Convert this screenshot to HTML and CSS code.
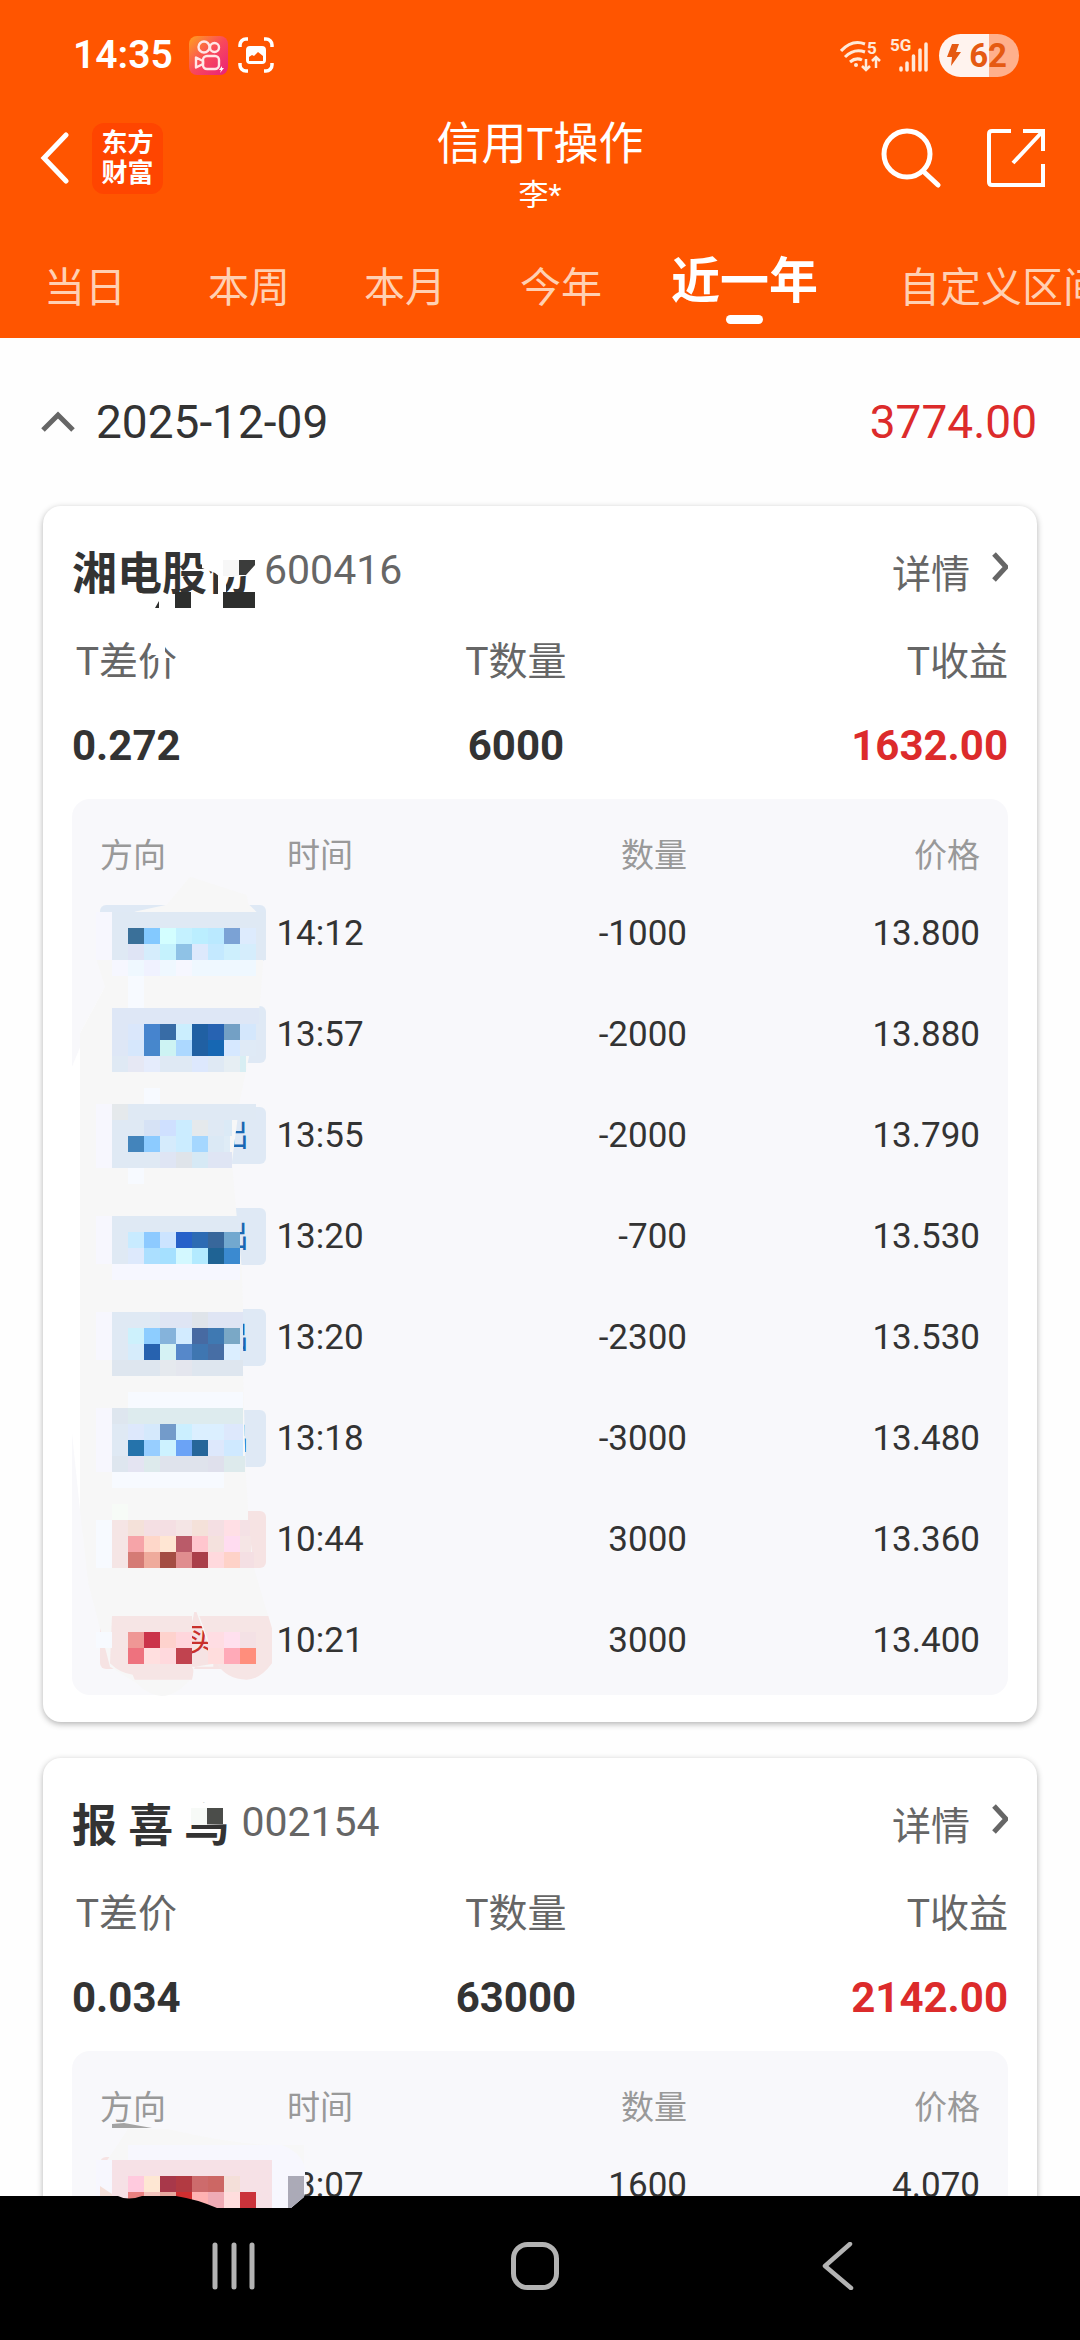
FILE: index.html
```
<!DOCTYPE html>
<html lang="zh-CN">
<head>
    <meta charset="UTF-8">
    <meta name="viewport" content="width=device-width, initial-scale=1">
    <title>信用T操作</title>
    <link rel="stylesheet" href="styles.css">
</head>
<body>
    <header class="header">
        <div class="status-bar">
            <span class="clock">14:35</span>
            <svg class="app-icon" width="39" height="39" viewBox="0 0 39 39">
                <defs>
                    <linearGradient id="app" x1="0" y1="0" x2="1" y2="1">
                        <stop offset="0" stop-color="#ffa11f"/>
                        <stop offset="0.5" stop-color="#f9495b"/>
                        <stop offset="1" stop-color="#e8207c"/>
                    </linearGradient>
                </defs>
                <rect width="39" height="39" rx="8" fill="url(#app)"/>
                <g fill="none" stroke="#ffe6e6" stroke-width="2.4">
                    <circle cx="15" cy="11" r="5.5"/>
                    <circle cx="25.500" cy="11.500" r="4.5"/>
                    <rect x="14" y="20" width="16" height="13" rx="4"/>
                    <path d="M14 25l-7-3.500v10l7-3.500z" stroke-linejoin="round"/>
                </g>
                <path d="M33 30l-3 4h2l-1 3 4-5h-2z" fill="#fff"/>
            </svg>
            <svg class="scan-icon" width="36" height="36" viewBox="0 0 36 36">
                <path d="M2 10V8a6 6 0 0 1 6-6h2M26 2h2a6 6 0 0 1 6 6v2M34 26v2a6 6 0 0 1-6 6h-2M10 34H8a6 6 0 0 1-6-6v-2" fill="none" stroke="#fff" stroke-width="3.500"/>
                <path fill-rule="evenodd" fill="#fff" d="M12 9h12a4 4 0 0 1 4 4v10a4 4 0 0 1-4 4H12a4 4 0 0 1-4-4V13a4 4 0 0 1 4-4zM11 20v4h14v-5l-5-4-4 4-2-1z"/>
            </svg>
            <div class="status-right">
                <svg width="42" height="44" viewBox="0 -8 42 44" fill="none" stroke="#ffe9d8" stroke-width="3">
                    <path d="M1 10Q12-2 25 3M5 16Q14 7 25 11M10 21Q16 16 22 19"/>
                    <circle cx="16" cy="24" r="2" fill="#ffe9d8" stroke="none"/>
                    <path d="M26 18v11M22 25l4 4 4-4M36 27V17M32 20l4-4 4 4" stroke-width="2.500"/>
                    <text class="tiny" x="27" y="13">5</text>
                </svg>
                <svg class="signal" width="38" height="44" viewBox="0 -6 38 44">
                    <text class="tiny" x="0" y="12">5G</text>
                    <path d="M11 31v-2M17 31v-7M23.500 31V17M30 31V11M36 31V5" stroke="#ffe9d8" stroke-width="3.500" stroke-linecap="round"/>
                </svg>
                <span class="battery">
                    <svg width="14" height="22" viewBox="0 0 14 22"><path d="M5 0h7L9 8h5L4 22l1-9H0z" fill="#e55a12"/></svg>62
                </span>
            </div>
        </div>

        <div class="title-bar">
            <div class="title-left">
                <button class="icon-btn" aria-label="返回">
                    <svg width="29" height="52" viewBox="0 0 29 52"><path d="M26 3L4 26l22 23" fill="none" stroke="#fff" stroke-width="5" stroke-linecap="round"/></svg>
                </button>
                <span class="logo">东方<br>财富</span>
            </div>
            <div class="title">
                <h1>信用T操作</h1>
                <p>李*</p>
            </div>
            <div class="title-right">
                <button class="icon-btn" aria-label="搜索">
                    <svg width="60" height="60" viewBox="0 0 60 60" fill="none" stroke="#fff" stroke-width="5" stroke-linecap="round"><circle cx="26" cy="26" r="23"/><path d="M42 43l15 14"/></svg>
                </button>
                <button class="icon-btn" aria-label="分享">
                    <svg width="58" height="58" viewBox="0 0 58 58" fill="none" stroke="#fff" stroke-width="4"><path d="M24 2H5Q2 2 2 5v48q0 3 3 3h51V35M36 2h20v20M56 2L26 34"/></svg>
                </button>
            </div>
        </div>

        <nav class="tabs">
            <a href="#">当日</a>
            <a href="#">本周</a>
            <a href="#">本月</a>
            <a href="#">今年</a>
            <a href="#" class="active">近一年</a>
            <a href="#">自定义区间</a>
        </nav>
    </header>

    <main>
        <div class="day">
            <svg width="34" height="22" viewBox="0 0 34 22"><path d="M2 19L17 4l15 15" fill="none" stroke="#666" stroke-width="5"/></svg>
            <span class="day-date">2025-12-09</span>
            <span class="day-total">3774.00</span>
        </div>

        <section class="card">
            <div class="card-head">
                <h2 class="name">湘电股份
                    <svg class="mask" width="184" height="60" viewBox="0 0 184 60">
                        <path d="M130 0h54v24l-24 2-12 0-5-4-13-5zM146 16h8v30h-8z" fill="#fff"/>
                        <path d="M79 90h14v14H79z" fill="#fff"/>
                        <path d="M151 9h16v16h-16z" fill="#f7f7f7"/>
                        <path d="M167 9h16v5l-9 10h-7z" fill="#3b3c3b"/>
                        <path d="M103 41h16v16h-16zM151 41h32v16h-32zM83 57l4-7v7z" fill="#2d2e2d"/>
                    </svg>
                </h2>
                <span class="code">600416</span>
                <a href="#" class="detail">详情 <svg width="16" height="30" viewBox="0 0 16 30"><path d="M2 2l12 13L2 28" fill="none" stroke="#666" stroke-width="5"/></svg></a>
            </div>
            <dl class="stats">
                <div><dt>T差价</dt><dd>0.272</dd></div>
                <div><dt>T数量</dt><dd>6000</dd></div>
                <div><dt>T收益</dt><dd class="up">1632.00</dd></div>
            </dl>
            <div class="trades">
                <table>
                    <thead>
                        <tr><th class="dir">方向</th><th class="time">时间</th><th>数量</th><th class="price">价格</th></tr>
                    </thead>
                    <tbody>
                        <tr><td><span class="badge sell"></span></td><td>14:12</td><td>-1000</td><td>13.800</td></tr>
                        <tr><td><span class="badge sell"></span></td><td>13:57</td><td>-2000</td><td>13.880</td></tr>
                        <tr><td><span class="badge sell">出</span></td><td>13:55</td><td>-2000</td><td>13.790</td></tr>
                        <tr><td><span class="badge sell">出</span></td><td>13:20</td><td>-700</td><td>13.530</td></tr>
                        <tr><td><span class="badge sell">出</span></td><td>13:20</td><td>-2300</td><td>13.530</td></tr>
                        <tr><td><span class="badge sell">出</span></td><td>13:18</td><td>-3000</td><td>13.480</td></tr>
                        <tr><td><span class="badge buy"></span></td><td>10:44</td><td>3000</td><td>13.360</td></tr>
                        <tr><td><span class="badge buy inset">买</span></td><td>10:21</td><td>3000</td><td>13.400</td></tr>
                    </tbody>
                </table>
                <!-- three units to the pixel, tiles are 48 units -->
                <svg class="mask" width="220" height="900" viewBox="36 -3 660 2700">
                    <path d="M135 560L36 800V1900L60 2130V700z" fill="#fff"/>
                    <path fill="#f7f7f7" fill-rule="evenodd" d="M60 700L135 560 110 480 124 366 230 334 320 314 390 230 560 285 565 312 590 336 610 480 600 612 565 780 540 900 516 1085 530 1248 545 1400 549 1518V1688L552 1820 557 2015 564 2120V2160L582 2304 625 2450 636 2490V2590L560 2640 470 2590 405 2600 390 2640Q310 2730 230 2650L150 2600 85 2350 60 2130zM396 2470V2600H460V2560L440 2520 405 2424z"/>
                    <path fill="#f6e5e5" d="M156 2448H396V2600Q404 2610 396 2639H224L218 2624Q180 2620 150 2590zM418 2448H625L636 2485V2590Q600 2639 560 2639 500 2639 470 2590H444V2520z"/>
                    <g id="tiles-600416" shape-rendering="crispEdges"></g>
                </svg>
            </div>
        </section>

        <section class="card">
            <div class="card-head">
                <h2 class="name">报 喜 鸟
                    <svg class="mask" width="184" height="60" viewBox="0 0 184 60">
                        <path d="M112 0h46v21l-38 1-8-2z" fill="#fff"/>
                        <path d="M119 5h16v17h-16z" fill="#f7faf7"/>
                        <path d="M135 5h16v16h-16z" fill="#4b4d4a"/>
                    </svg>
                </h2>
                <span class="code">002154</span>
                <a href="#" class="detail">详情 <svg width="16" height="30" viewBox="0 0 16 30"><path d="M2 2l12 13L2 28" fill="none" stroke="#666" stroke-width="5"/></svg></a>
            </div>
            <dl class="stats">
                <div><dt>T差价</dt><dd>0.034</dd></div>
                <div><dt>T数量</dt><dd>63000</dd></div>
                <div><dt>T收益</dt><dd class="up">2142.00</dd></div>
            </dl>
            <div class="trades">
                <table>
                    <thead>
                        <tr><th class="dir">方向</th><th class="time">时间</th><th>数量</th><th class="price">价格</th></tr>
                    </thead>
                    <tbody>
                        <tr><td><span class="badge buy"></span></td><td>13:07</td><td>1600</td><td>4.070</td></tr>
                    </tbody>
                </table>
                <svg class="mask" width="240" height="160" viewBox="0 0 240 160">
                    <path d="M40 73l12-1 28 5H40z" fill="#a3a3a3"/>
                    <path d="M56 78l40 0q60 14 100 16h36V120L190 157H28V120z" fill="#f7f7f7"/>
                    <path d="M120 94h90q25 10 23 30l2 10-3 12-13 11H24V109h32V94z" fill="#f7f7fe"/>
                    <path d="M28 135l12 8v5H28z" fill="#f4dfd9"/>
                    <g id="tiles-002154" shape-rendering="crispEdges"></g>
                    <path d="M216 125h16v21l-13 11h-3z" fill="#abaab7"/>
                    <path d="M0 145H46q10 5 24 0h34q20 3 41 12v3H0z" fill="#000"/>
                </svg>
            </div>
        </section>
    </main>

    <footer class="nav-bar">
        <button class="icon-btn" aria-label="最近任务">
            <svg width="48" height="48" viewBox="0 0 48 48"><path d="M6 3v42M25 3v42M43 3v42" stroke="#b3b3b3" stroke-width="5" stroke-linecap="round"/></svg>
        </button>
        <button class="icon-btn" aria-label="主屏幕">
            <svg width="48" height="48" viewBox="0 0 48 48"><rect x="2.500" y="2.500" width="43" height="43" rx="14" fill="none" stroke="#b3b3b3" stroke-width="5"/></svg>
        </button>
        <button class="icon-btn" aria-label="后退">
            <svg width="48" height="48" viewBox="0 0 48 48"><path d="M37 2L12 24l26 22" fill="none" stroke="#b3b3b3" stroke-width="4.500" stroke-linecap="round" stroke-linejoin="round"/></svg>
        </button>
    </footer>

    <script src="tiles.js"></script>
</body>
</html>
```
FILE: styles.css
```
:root {
    --brand: #ff5500;
    --text: #333;
    --text-2: #666;
    --text-3: #999;
    --up: #dc2b2b;
    --panel: #f8f8fb;
}

* {
    box-sizing: border-box;
}

body {
    margin: 0;
    height: 100vh;
    overflow: hidden;
    background: #fefefe;
    color: var(--text);
    font-family: Roboto, "Noto Sans CJK SC", sans-serif;
}

h1, h2, p, dl, dd {
    margin: 0;
}

a {
    color: inherit;
    text-decoration: none;
}

svg {
    display: block;
    flex: none;
}

.icon-btn {
    padding: 0;
    border: none;
    background: none;
}

/* header */
.header {
    background: var(--brand);
    color: white;
}

.status-bar {
    display: flex;
    align-items: center;
    height: 110px;
    padding: 0 61px 0 73px;
}

.clock {
    font-size: 39px;
    font-weight: 600;
}

.app-icon {
    margin-left: 16px;
}

.scan-icon {
    margin-left: 10px;
}

.status-right {
    display: flex;
    align-items: center;
    margin-left: auto;
}

.signal {
    margin: 0 11px 0 8px;
}

.tiny {
    font-size: 17px;
    font-weight: 700;
    fill: #ffe9d8;
    stroke: none;
}

.battery {
    display: flex;
    align-items: center;
    gap: 8px;
    height: 43px;
    padding: 0 12px 0 8px;
    border-radius: 22px;
    background: linear-gradient(90deg, #fff3ee 62%, #ffb08c 62%);
    color: #e55a12;
    font-size: 33px;
    font-weight: 700;
}

.title-bar {
    display: grid;
    grid-template-columns: 1fr auto 1fr;
    height: 110px;
    padding: 0 35px;
}

.title-left,
.title-right {
    display: flex;
    align-items: center;
    height: 96px;
}

.title-left {
    padding-left: 5px;
}

.title-right {
    justify-content: flex-end;
    gap: 46px;
}

.logo {
    margin-left: 23px;
    width: 71px;
    height: 71px;
    padding: 5px 0;
    border-radius: 12px;
    background: #ff4500;
    font-size: 26px;
    font-weight: 700;
    line-height: 30px;
    text-align: center;
}

.title {
    padding-top: 9px;
    text-align: center;
}

.title h1 {
    font-size: 45px;
    font-weight: 400;
    line-height: 52px;
}

.title p {
    font-size: 30px;
    line-height: 48px;
}

.tabs {
    display: flex;
    align-items: center;
    height: 118px;
    padding: 18px 0 0 7px;
    overflow: hidden;
    white-space: nowrap;
}

.tabs a {
    flex: none;
    padding: 0 37px;
    color: #ffd0b3;
    font-size: 41px;
    line-height: 60px;
}

.tabs a:first-child {
    padding-right: 45px;
}

.tabs .active {
    padding: 0 44px 0 32px;
    color: white;
    font-size: 49px;
    font-weight: 700;
}

.tabs .active::after {
    content: "";
    display: block;
    width: 37px;
    height: 9px;
    margin: 3px auto 0;
    border-radius: 5px;
    background: white;
}

/* day summary */
.day {
    display: flex;
    align-items: center;
    height: 168px;
    padding: 0 43px 0 41px;
    font-size: 46px;
}

.day-date {
    margin-left: 21px;
}

.day-total {
    margin-left: auto;
    color: var(--up);
}

/* stock card */
.card {
    margin: 0 43px 36px;
    padding: 36px 29px 27px;
    border-radius: 18px;
    background: white;
    box-shadow: 0 2px 6px rgba(0, 0, 0, 0.3);
}

.card-head {
    display: flex;
    align-items: center;
    height: 62px;
}

.name {
    position: relative;
    padding-top: 4px;
    font-size: 45px;
    font-weight: 700;
    line-height: 44px;
}

.code {
    margin-left: 12px;
    padding-bottom: 6px;
    color: var(--text-2);
    font-size: 41px;
}

.detail {
    display: flex;
    align-items: center;
    gap: 22px;
    margin-left: auto;
    padding-bottom: 4px;
    color: var(--text-2);
    font-size: 39px;
}

.detail svg {
    margin-bottom: 8px;
}

.stats {
    display: flex;
    justify-content: space-between;
    padding: 16px 0 11px;
    text-align: center;
}

.stats dt {
    color: var(--text-2);
    font-size: 39px;
    line-height: 84px;
}

.stats dd {
    font-size: 42px;
    font-weight: 700;
    line-height: 84px;
}

.stats div:last-child {
    text-align: right;
}

.stats .up {
    color: var(--up);
}

.trades {
    position: relative;
    padding: 30px 28px 4px;
    border-radius: 18px;
    background: var(--panel);
}

table {
    width: 100%;
    table-layout: fixed;
    border-collapse: collapse;
    font-size: 35px;
    text-align: right;
}

th {
    height: 54px;
    padding: 0;
    color: var(--text-3);
    font-size: 33px;
    font-weight: 400;
    line-height: 54px;
    text-align: right;
}

th.dir {
    width: 166px;
    text-align: left;
}

th.time,
td:nth-child(2) {
    text-align: center;
}

th.time {
    width: 108px;
}

th.price {
    width: 293px;
}

td {
    height: 101px;
    padding: 0;
}

.badge {
    display: block;
    height: 57px;
    padding-right: 17px;
    border-radius: 6px;
    font-size: 32px;
    line-height: 57px;
}

.badge.sell {
    background: #dfe9f5;
    color: #1a67b3;
}

.badge.buy {
    background: #f6e3e3;
    color: #c9302c;
}

.badge.inset {
    padding-right: 48px;
}

.mask {
    position: absolute;
    top: 0;
    left: 0;
    z-index: 2;
    overflow: visible;
}

.name .mask {
    top: 2px;
}

/* system navigation */
.nav-bar {
    position: fixed;
    right: 0;
    bottom: 0;
    left: 0;
    z-index: 1;
    display: flex;
    align-items: center;
    justify-content: space-around;
    height: 144px;
    padding: 0 92px 4px 82px;
    background: black;
}
```
FILE: tiles.js
```
// [column, row, colours...] runs of mosaic tiles; "rrggbb*n" repeats a colour n times
const tiles600416 = [
    [0, 0, 'f7f7fe'], [0, 1, 'f7f7fe'], [0, 2, 'f7f7fe'],
    [1, 0, 'dfe9f4*9.6'],
    [1, 1, 'dfe9f4 3a7099 83c9ff d3feff c4f1ff bbeeff bae9ff 7ba2d5 ddebfd dfe9f4*0.6'],
    [1, 2, 'dfe9f4 dfe4f5 d5edfc c5f2fd 8fc2e6 dde9fc c4e9ff cdeffd d5edfc dfe9f4*0.6'],
    [1, 3, 'f6f7ff eff8ff f0f2ff eff8ff f6f7ff eff8ff*4'],
    [2, 4, 'f7faff'], [2, 5, 'f7faff'],

    [1, 6, 'dee7f6*9.2'],
    [1, 7, 'dee7f6 dae7fb 4684ce 386ca6 cbeefe 2060a3 2763b2 73a0c5 d4e7fc'],
    [1, 8, 'dee7f6 d6e7fc 4787cc cdf3f3 acd8ff 2060a3 1667b3 d6e8ff dfeaf6'],
    [1, 9, 'dfe9f4 e6e8f4 e5ecfc dfe9f4*2 dde8fd dfe9f4 e6eef3 d8eef3*0.4'],
    [3, 11, 'f7faff'],

    [0, 12, 'f7f7fe e5e9ec dfe9f4*8'],
    [0, 13, 'f7f7fe dfe9f4*2 d6e2f5 cfe0ff cbecff e5e9ec dfe9f4 dbeaf6*0.5'],
    [0, 14, 'f7f7fe dfe9f4 4384bb 8ccbff d5ebfc cbecff a5d7ff dbe9f5 dfecf6*0.4'],
    [0, 15, 'f7f7fe dfe9f4*3 dfe5f4 dfe4ea d6e9f5 dfe5f4*1.5'],
    [2, 16, 'f7faff'],

    [0, 19, 'f7f7fe dfe9f4*7.9'],
    [0, 20, 'f7f7fe dfe9f4 c8ebff 8dcaff cce4ff 2761c9 2d6bb3 38679b 72a8cf'],
    [0, 21, 'f7f7fe dfe9f4 dde9fc abdfff a5e0ff d3f8ff b3eaff 1f6394 3b8ad0'],
    [1, 22, 'f6f7ff*8'],

    [0, 25, 'f7f7fe dfe9f4*3 dfe5f4*2 dfe4ea dfe5f4*2.2'],
    [0, 26, 'f7f7fe dfe9f4 cdf1fc 8dcdff 85b3db d2ebff 476aa2 3f79b2 7aa8c6 dfe9f4*0.2'],
    [0, 27, 'f7f7fe dfe9f4 d6ecfb 2762af d5f2f4 5688ca 3f76b1 476ea5 dbeeff dfe9f4*0.2'],
    [1, 28, 'dee6ef*3 e5e9ee e4e6ee dee6ef*3.2'],
    [2, 30, 'f7faff*7.2'],

    [0, 31, 'f7f7fe dee6ef ddebee*7.2'],
    [0, 32, 'f7f7fe dfe9f4 dde8fc d5e9fc 739bca cbefff dbefff*2 dde8fc*1.2'],
    [0, 33, 'f7f7fe dfe9f4 2573ab 97ceff cdf2ff 6ba3f6 26669a dde8fc cfe9ff*1.2'],
    [0, 34, 'f7f7fe dee6ef e4e4f2 ddeaec dfe3ec*3 dfe0ec ddeaec*1.3'],
    [1, 35, 'f7faff*7'],
    [1, 37, 'f7fbf7'],

    [0, 38, 'f7faff f5e5e5 f4e1d9 f4dfe3*2 f4e5e5 f4e1d9 f4dfe3 ffdfe5 f4e1e5*0.6'],
    [0, 39, 'f7faff f5e5e5 f6a4a8 fed7c9 ffe6d3 ba5b69 ffc6ce f4e1dd ffdcf0 f5e5e5*0.7'],
    [0, 40, 'f7faff f5e5e5 d57b75 efab9c a44d43 e08d8f aa3f4a ffd9dd fed2c8 f4dfe3*0.9'],

    [0, 45, 'f7faff f6e5e5 ef9795 cb344a fed2cd ffd6dc'],
    [7, 45, 'ffdde3 ffe0ee f4e1e5'],
    [1, 46, 'f6e5e5 ee727e ffdfdf ffd9dd c1434f'],
    [7, 46, 'ffdddd ffaab8 ff8e7c']
];

const tiles002154 = [
    [0, 0, 'f6e1e6*10'],
    [0, 1, 'f6e1e6 ffcade fee7d3 a8384a b23a42 cd6b6c cc6764 f4dfd9 f6e1e6*2'],
    [0, 2, 'f6e1e6 e98080 f3c4bd e7a9a0 d12e30 ffb2b2 efabb5 ffdddd cb333b f6e1e6']
];

function drawTiles(id, runs, x0, y0, size) {
    let html = '';
    runs.forEach(([col, row, colours]) => {
        let x = x0 + col * size;
        colours.split(' ').forEach(c => {
            const [hex, count] = c.split('*');
            const width = size * (count || 1);
            html += `<rect x="${x}" y="${y0 + row * size}" width="${width}" height="${size}" fill="#${hex}"/>`;
            x += width;
        });
    });
    document.getElementById(id).innerHTML = html;
}

drawTiles('tiles-600416', tiles600416, 108, 336, 48);
drawTiles('tiles-002154', tiles002154, 40, 109, 16);
```
